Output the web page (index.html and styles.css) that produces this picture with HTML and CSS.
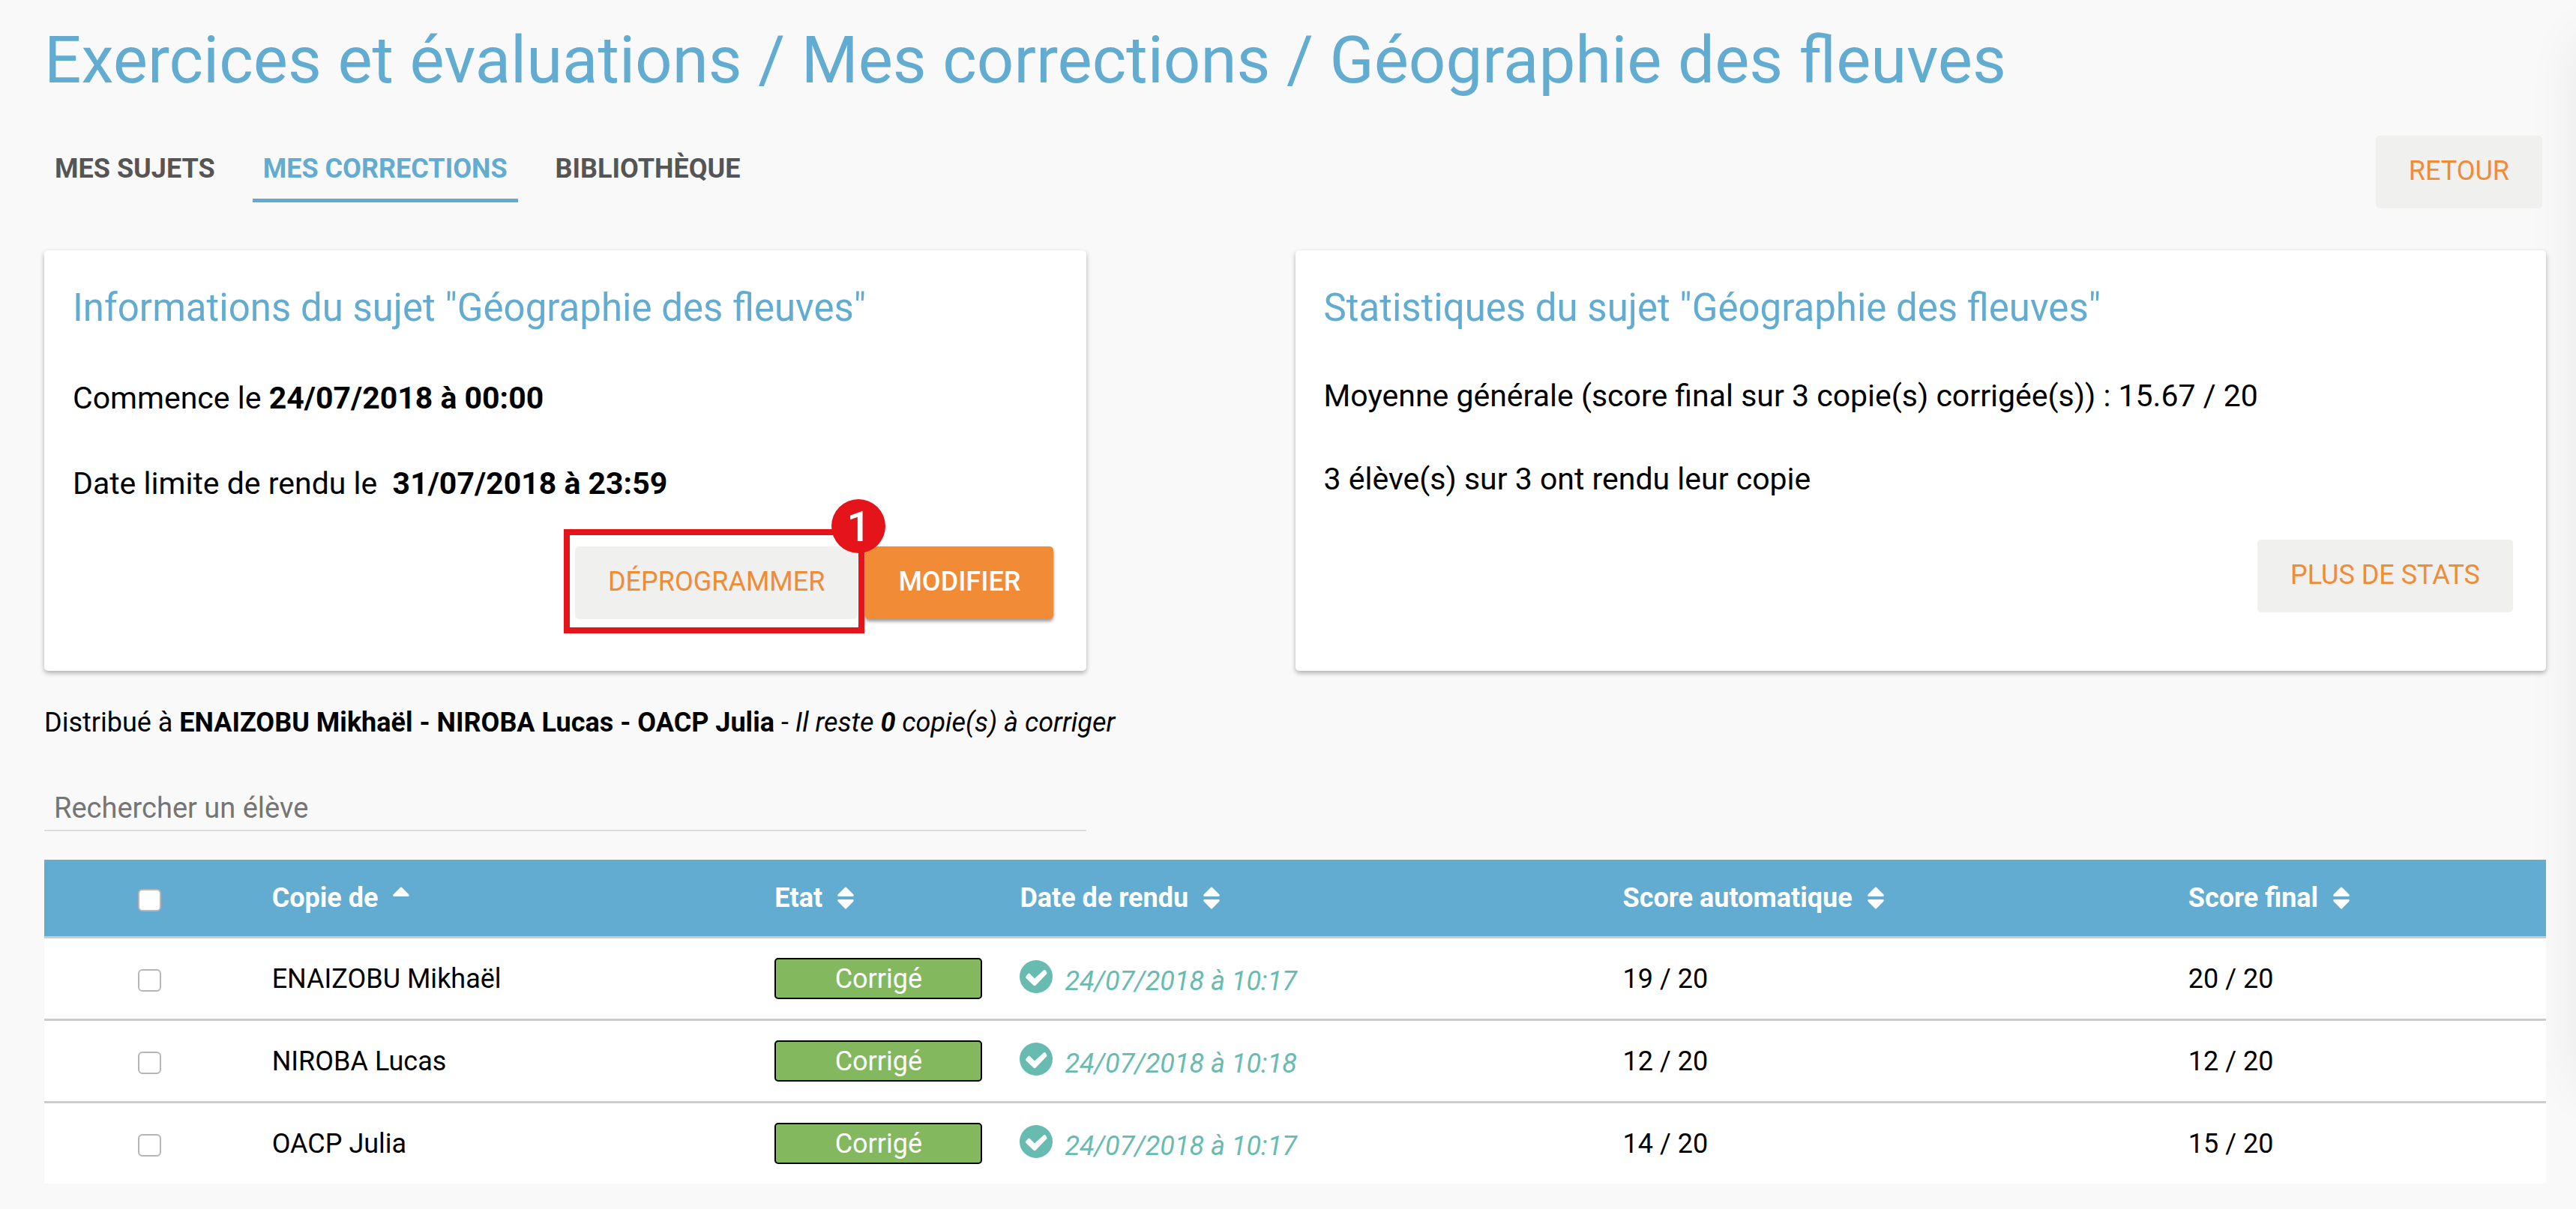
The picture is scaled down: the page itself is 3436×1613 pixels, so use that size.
FILE: index.html
```html
<!DOCTYPE html>
<html lang="fr">
<head>
  <meta charset="utf-8">
  <meta name="viewport" content="width=device-width, initial-scale=1">
  <title>Exercices et évaluations</title>
  <link rel="stylesheet" href="styles.css">
</head>
<body>
  <svg class="sprite" aria-hidden="true">
    <symbol id="sort" viewBox="0 0 22 30">
      <path d="M10 1Q11 0 12 1L21 10Q23 13 20 13H2Q-1 13 1 10Z"/>
      <path d="M10 29Q11 30 12 29L21 20Q23 17 20 17H2Q-1 17 1 20Z"/>
    </symbol>
    <symbol id="sort-up" viewBox="0 0 22 30">
      <path d="M10 1Q11 0 12 1L21 10Q23 13 20 13H2Q-1 13 1 10Z"/>
    </symbol>
    <symbol id="check" viewBox="0 0 44 44">
      <circle cx="22" cy="22" r="22"/>
      <path class="tick" d="M8.500 21.500L11.500 18Q12.500 17 13.500 18L20 24.500L32 13.500Q33.500 12.500 34.500 13.500L36 16Q37 17.500 36 18.500L21.500 33.500Q20 35 18.500 33.500L8.500 24Q7.500 22.700 8.500 21.500Z"/>
    </symbol>
  </svg>

  <main class="page">
    <h1 class="title">Exercices et évaluations / Mes corrections / Géographie des fleuves</h1>

    <div class="toolbar">
      <nav class="tabs">
        <a class="tab" href="#">MES SUJETS</a>
        <a class="tab tab-active" href="#">MES CORRECTIONS</a>
        <a class="tab" href="#">BIBLIOTHÈQUE</a>
      </nav>
      <button class="btn btn-back" type="button">RETOUR</button>
    </div>

    <div class="cards">
      <section class="card card-info">
        <h2 class="card-title">Informations du sujet "Géographie des fleuves"</h2>
        <p class="card-line">Commence le <strong>24/07/2018 à 00:00</strong></p>
        <p class="card-line">Date limite de rendu le &nbsp;<strong>31/07/2018 à 23:59</strong></p>
        <div class="actions">
          <div class="marked">
            <button class="btn" type="button">DÉPROGRAMMER</button>
            <span class="frame"></span>
            <span class="step">1</span>
          </div>
          <button class="btn btn-primary" type="button">MODIFIER</button>
        </div>
      </section>
      <section class="card card-stats">
        <h2 class="card-title">Statistiques du sujet "Géographie des fleuves"</h2>
        <p class="card-line">Moyenne générale (score final sur 3 copie(s) corrigée(s)) : 15.67 / 20</p>
        <p class="card-line">3 élève(s) sur 3 ont rendu leur copie</p>
        <div class="actions">
          <button class="btn" type="button">PLUS DE STATS</button>
        </div>
      </section>
    </div>

    <p class="recipients">Distribué à <strong>ENAIZOBU Mikhaël - NIROBA Lucas - OACP Julia</strong> - <em>Il reste <strong>0</strong> copie(s) à corriger</em></p>

    <input class="search" type="text" placeholder="Rechercher un élève" aria-label="Rechercher un élève">

    <table class="copies">
      <colgroup>
        <col class="col-select"><col class="col-name"><col class="col-state"><col class="col-date"><col class="col-auto"><col class="col-final">
      </colgroup>
      <thead>
        <tr>
          <th class="select"><input class="box" type="checkbox" aria-label="Tout sélectionner"></th>
          <th><button class="sorter" type="button">Copie de <svg class="sort"><use href="#sort-up"/></svg></button></th>
          <th><button class="sorter" type="button">Etat <svg class="sort"><use href="#sort"/></svg></button></th>
          <th><button class="sorter" type="button">Date de rendu <svg class="sort"><use href="#sort"/></svg></button></th>
          <th><button class="sorter" type="button">Score automatique <svg class="sort"><use href="#sort"/></svg></button></th>
          <th><button class="sorter" type="button">Score final <svg class="sort"><use href="#sort"/></svg></button></th>
        </tr>
      </thead>
      <tbody>
        <tr>
          <td class="select"><input class="box" type="checkbox" aria-label="ENAIZOBU Mikhaël"></td>
          <td>ENAIZOBU Mikhaël</td>
          <td><span class="badge">Corrigé</span></td>
          <td><div class="date"><svg class="check"><use href="#check"/></svg><em>24/07/2018 à 10:17</em></div></td>
          <td>19 / 20</td>
          <td>20 / 20</td>
        </tr>
        <tr>
          <td class="select"><input class="box" type="checkbox" aria-label="NIROBA Lucas"></td>
          <td>NIROBA Lucas</td>
          <td><span class="badge">Corrigé</span></td>
          <td><div class="date"><svg class="check"><use href="#check"/></svg><em>24/07/2018 à 10:18</em></div></td>
          <td>12 / 20</td>
          <td>12 / 20</td>
        </tr>
        <tr>
          <td class="select"><input class="box" type="checkbox" aria-label="OACP Julia"></td>
          <td>OACP Julia</td>
          <td><span class="badge">Corrigé</span></td>
          <td><div class="date"><svg class="check"><use href="#check"/></svg><em>24/07/2018 à 10:17</em></div></td>
          <td>14 / 20</td>
          <td>15 / 20</td>
        </tr>
      </tbody>
    </table>
  </main>
</body>
</html>
```
FILE: styles.css
```css
:root {
  --blue: #62acd1;
  --orange: #f18b36;
  --teal: #68bbb0;
  --red: #e5141b;
}

* {
  box-sizing: border-box;
}

body {
  margin: 0;
  background: #f9f9f9;
  color: #000;
  font-family: Roboto, "Liberation Sans", sans-serif;
  font-size: 36px;
  line-height: 44px;
}

.sprite {
  display: none;
}

.page {
  position: relative;
  isolation: isolate;
  min-height: 100vh;
  padding: 28px 40px 34px 59px;
  overflow: hidden;
}

/* soft shade cast along the right edge */
.page::after {
  content: "";
  position: absolute;
  z-index: -1;
  top: 3%;
  bottom: 10%;
  left: 100%;
  width: 100px;
  border-radius: 20px;
  box-shadow: 0 0 70px rgba(0, 0, 0, 0.07);
}

.title {
  margin: 0 0 49px;
  color: var(--blue);
  font-size: 87px;
  font-weight: 400;
  line-height: 104px;
}

.toolbar {
  display: flex;
  justify-content: space-between;
  align-items: flex-start;
  margin-bottom: 56px;
}

.tabs {
  display: flex;
  gap: 36px;
  padding-top: 22px;
}

.tab {
  padding: 0 14px 18px;
  border-bottom: 5px solid transparent;
  color: #555;
  font-weight: 700;
  text-decoration: none;
}

.tab-active {
  border-color: var(--blue);
  color: var(--blue);
}

.btn {
  display: block;
  padding: 25px 44px 28px;
  border: 0;
  border-radius: 5px;
  background: #f0f0ee;
  color: var(--orange);
  font: inherit;
}

.btn-back {
  margin-right: 5px;
}

.btn-primary {
  background: var(--orange);
  box-shadow: 0 3px 4px rgba(0, 0, 0, 0.4);
  color: #fff;
  font-weight: 500;
}

.cards {
  display: grid;
  grid-template-columns: repeat(12, 1fr);
  margin-bottom: 47px;
}

.card {
  padding: 47px 38px 69px;
  border-radius: 5px;
  background: #fff;
  box-shadow: 0 3px 6px rgba(0, 0, 0, 0.3);
}

.card-info {
  grid-column: 1 / span 5;
}

.card-stats {
  grid-column: 7 / span 6;
}

.card-title {
  margin: 0 0 66px;
  color: var(--blue);
  font-size: 51px;
  font-weight: 400;
  line-height: 60px;
}

.card-line {
  margin: 0 0 66px;
  font-size: 41px;
  line-height: 48px;
}

.card-stats .card-title,
.card-stats .card-line {
  margin-bottom: 63px;
}

.actions {
  display: flex;
  justify-content: flex-end;
  gap: 10px;
  margin-top: -6px;
  padding-right: 6px;
}

.marked {
  position: relative;
}

.frame {
  position: absolute;
  z-index: 1;
  top: -23px;
  right: -9px;
  bottom: -19px;
  left: -15px;
  border: 8px solid var(--red);
  pointer-events: none;
}

.step {
  position: absolute;
  z-index: 2;
  top: -63px;
  right: -37px;
  width: 72px;
  height: 72px;
  border-radius: 50%;
  background: var(--red);
  color: #fff;
  font-size: 56px;
  font-weight: 500;
  line-height: 74px;
  text-align: center;
}

.recipients {
  margin: 0 0 69px;
}

.search {
  display: block;
  width: calc(100% * 5 / 12);
  margin-bottom: 38px;
  padding: 0 13px 6px;
  border: 0;
  border-bottom: 2px solid #ddd;
  border-radius: 0;
  background: none;
  color: #000;
  font-family: inherit;
  font-size: 38px;
  line-height: 46px;
}

.search::placeholder {
  color: #757575;
  line-height: 46px;
}

.copies {
  width: 100%;
  border-spacing: 0;
  table-layout: fixed;
  background: #fff;
}

.col-select {
  width: 8.2%;
}

.col-name {
  width: 20.1%;
}

.col-state {
  width: 9.8%;
}

.col-date {
  width: 24.1%;
}

.col-auto {
  width: 22.6%;
}

.col-final {
  width: 15.2%;
}

.copies th,
.copies td {
  padding: 0 20px 0 30px;
  text-align: left;
  vertical-align: middle;
}

.copies th {
  height: 102px;
  background: var(--blue);
  color: #fff;
}

.copies td {
  height: 110px;
  border-top: 3px solid #ccc;
}

.copies .select {
  padding: 0 0 0 125px;
}

.box {
  display: block;
  width: 31px;
  height: 30px;
  margin: 5px 0 0;
  border: 2px solid #b5b5b5;
  border-radius: 6px;
  background: #fff;
  appearance: none;
}

.box:checked {
  background: var(--orange);
}

.sorter {
  display: flex;
  align-items: center;
  gap: 20px;
  padding: 0;
  border: 0;
  background: none;
  color: inherit;
  font: inherit;
  font-weight: 700;
}

.sort {
  width: 22px;
  height: 30px;
  fill: currentColor;
}

.badge {
  display: block;
  padding: 4px 0 3px;
  border: 2px solid #000;
  border-radius: 5px;
  background: #83b85f;
  color: #fff;
  text-align: center;
}

.date {
  display: flex;
  align-items: center;
  gap: 16px;
  color: var(--teal);
}

.date em {
  padding-top: 6px;
}

.check {
  width: 44px;
  height: 44px;
  margin-bottom: 6px;
  fill: currentColor;
}

.tick {
  fill: #fff;
}
```
